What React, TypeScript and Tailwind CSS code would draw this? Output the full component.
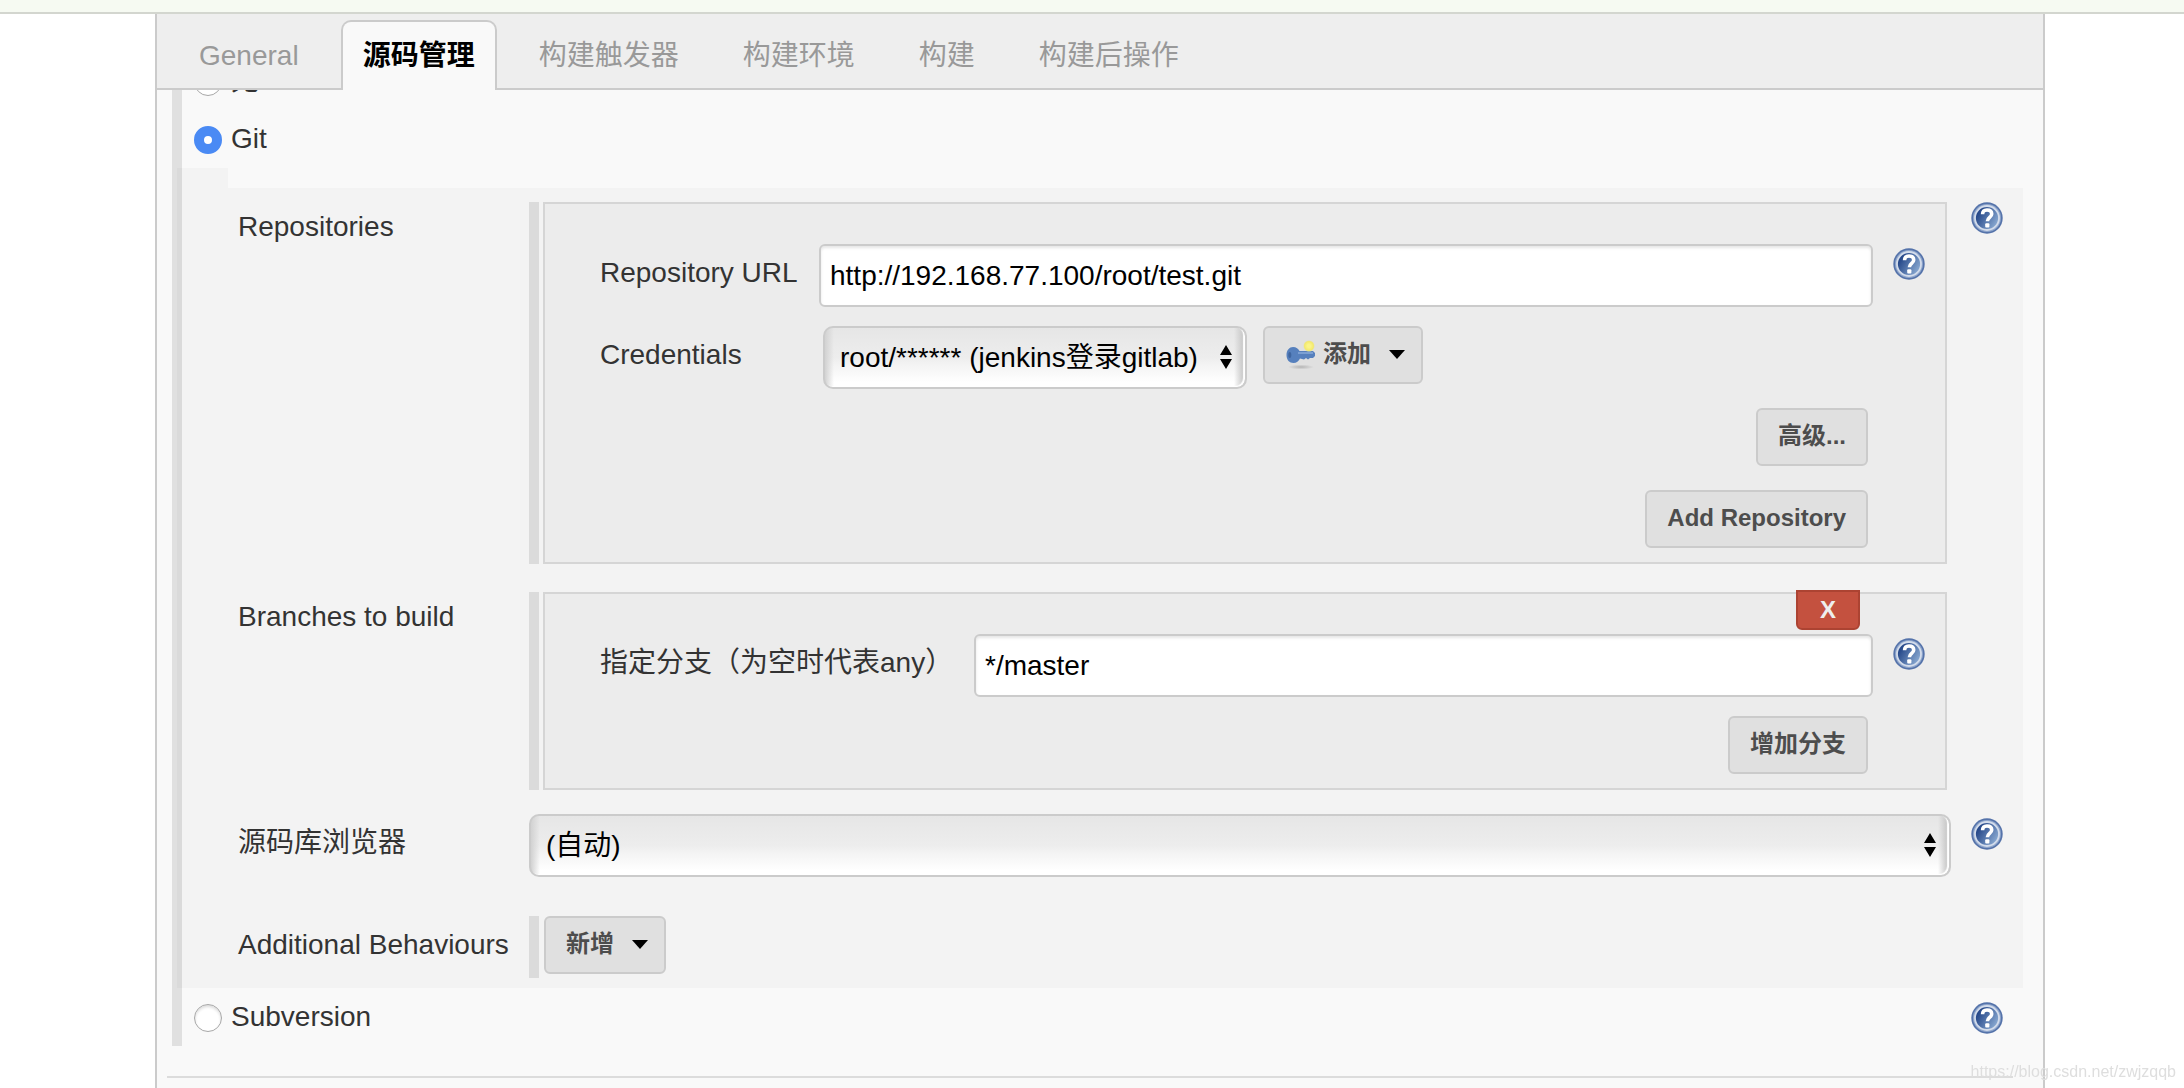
import { useState } from "react"
import type { ReactNode } from "react"

const tabs = ["General", "源码管理", "构建触发器", "构建环境", "构建", "构建后操作"]

const HelpIcon = ({ label }: { label: string }) => {
    return <button type="button" aria-label={label} className="block size-8 shrink-0">
        <svg viewBox="0 0 32 32" className="size-8">
            <defs>
                <linearGradient id="helpFill" x1="0" y1="0.2" x2="1" y2="0.8">
                    <stop offset="0.15" stopColor="#27498a" />
                    <stop offset="0.9" stopColor="#86a6cf" />
                </linearGradient>
            </defs>
            <circle cx="16" cy="16" r="15.7" fill="#5573aa" />
            <circle cx="16" cy="16" r="14" fill="#8fa6cc" />
            <circle cx="16" cy="16" r="12" fill="url(#helpFill)" stroke="#d3dceb" strokeWidth="1.8" />
            <path d="M11.600 12.200c0-2.700 1.800-4.200 4.400-4.200 2.800 0 4.700 1.500 4.700 4 0 3.500-4.300 3.300-4.300 7.200" fill="none" stroke="#fff" strokeWidth="3.600" />
            <rect x="14.200" y="21.200" width="4.200" height="4.200" rx="1" fill="#fff" />
        </svg>
    </button>
}

const KeyIcon = () => {
    return <svg viewBox="0 0 32 32" className="size-8">
        <defs>
            <radialGradient id="keyShadow">
                <stop offset="0.2" stopColor="#bdbdbd" />
                <stop offset="1" stopColor="#e0e0e0" />
            </radialGradient>
            <radialGradient id="keySpark">
                <stop offset="0.3" stopColor="#faf489" />
                <stop offset="0.8" stopColor="#f3e96e" />
                <stop offset="1" stopColor="#e6e2a8" />
            </radialGradient>
        </defs>
        <ellipse cx="16" cy="29" rx="13" ry="2.500" fill="url(#keyShadow)" />
        <path d="M1.500 17c0-5 3-8 6.500-8 3.200 0 5.500 1.800 6.500 4h13.500l2 2v3l-2 2h-3l-2 1.500-2-1.500-2 1.500-4-1c-1.200 2.500-3.500 4.500-6.500 4.500-4 0-7-3-7-8z" fill="#5680bd" />
        <path d="M13 15h15" stroke="#7b9fd2" strokeWidth="2" />
        <ellipse cx="4.800" cy="17" rx="1.500" ry="3" fill="#3f659f" />
        <circle cx="24" cy="8" r="5.500" fill="url(#keySpark)" />
    </svg>
}

const Caret = () => {
    return <svg viewBox="0 0 16 9" className="-mr-1 h-[9px] w-4">
        <path d="M0 0h16L8 9z" fill="#000" />
    </svg>
}

const Button = ({ children }: { children: ReactNode }) => {
    return <button
        type="button"
        className="flex h-[58px] items-center rounded-md border-2 border-[#cbcbcb] bg-[#e0e0e0] px-5 pb-0.5 text-2xl font-bold text-[#4d4d4d]">
        {children}
    </button>
}

const TextBox = ({ id, value }: { id: string, value: string }) => {
    return <input
        id={id}
        type="text"
        defaultValue={value}
        className="h-[63px] w-full min-w-0 rounded-md border-2 border-[#cbcbcb] bg-white px-[9px] text-[28px] text-black shadow-[inset_0_2px_3px_#e6e6e6] focus:outline-none" />
}

const Select = ({ id, options }: { id: string, options: string[] }) => {
    return <div className="relative">
        <select
            id={id}
            className="h-[63px] w-full appearance-none rounded-[10px] border-2 border-[#cbcbcb] bg-[linear-gradient(to_right,#d2d2d2,transparent_9px,transparent_calc(100%-11px),#c8c8c8_calc(100%-2px)),linear-gradient(#e6e6e6,#ededed_50%,#f3f3f3_62%,#ffffff_92%)] pl-[15px] pr-[47px] text-[28px] text-black shadow-[inset_-2px_-1px_1px_#fff] focus:outline-none">
            {options.map((o) => <option key={o}>{o}</option>)}
        </select>
        <svg viewBox="0 0 12 24" className="pointer-events-none absolute right-[15px] top-[19px] h-6 w-3">
            <path d="M6 0l6 10H0zM6 24l6-10H0z" fill="#000" />
        </svg>
    </div>
}

const RadioRow = ({ label, value, picked, onPick }: { label: string, value: string, picked: string, onPick: (v: string) => void }) => {
    return <label className="flex h-[58px] grow items-center gap-[9px] pl-3">
        <input
            type="radio"
            name="scm"
            value={value}
            checked={picked === value}
            onChange={() => onPick(value)}
            className="mt-0.5 size-7 appearance-none rounded-full border border-[#a8a8a8] bg-white shadow-[inset_0_2px_3px_#dcdcdc] checked:border-[10px] checked:border-[#4a8af4] checked:shadow-none" />
        {label}
    </label>
}

// grey strip on the left of every repeatable block
const Chunk = ({ children }: { children: ReactNode }) => {
    return <div className="mr-1 border-l-[10px] border-[#dbdbdb] pl-1">
        {children}
    </div>
}

const SettingRow = ({ label, htmlFor, labelClass, help, children }: { label: string, htmlFor?: string, labelClass: string, help?: ReactNode, children: ReactNode }) => {
    return <div className="flex items-start gap-5">
        <div className="flex min-w-0 grow">
            <label htmlFor={htmlFor} className={`w-[291px] shrink-0 ${labelClass}`}>{label}</label>
            <div className="min-w-0 grow">{children}</div>
        </div>
        <div className="w-8">{help}</div>
    </div>
}

const App = () => {

    const [tab,setTab] = useState("源码管理");
    const [scm,setScm] = useState("git");

    return <div className="flex min-h-screen flex-col overflow-hidden bg-white font-['Liberation_Sans','Noto_Sans_CJK_SC',sans-serif] text-[28px] leading-8 text-[#333]">
        <header className="h-[14px] border-b-2 border-[#d3d6cf] bg-[#f6faf2]"></header>

        <main className="ml-[155px] mr-[139px] grow border-x-2 border-[#cbcbcb] bg-[#f9f9f9]">
            <nav className="relative z-10 flex h-[76px] gap-5 border-b-2 border-[#cbcbcb] bg-[#eeeeee] pl-5 pt-1.5">
                {tabs.map((name) => (
                    <a
                        key={name}
                        href="#"
                        onClick={() => setTab(name)}
                        className={name === tab
                            ? "flex h-[70px] items-center rounded-t-[10px] border-2 border-b-0 border-[#cbcbcb] bg-[#f9f9f9] px-5 font-bold text-black"
                            : "flex h-[70px] items-center border-2 border-b-0 border-transparent px-5 text-[#999]"}>
                        {name}
                    </a>
                ))}
            </nav>

            <section className="ml-[15px] overflow-hidden">
                {/* the first option is scrolled half way under the tabs */}
                <div className="-mt-[38px] border-l-[10px] border-[#e0e0e0]">
                    <RadioRow label="无" value="none" picked={scm} onPick={setScm} />
                    <RadioRow label="Git" value="git" picked={scm} onPick={setScm} />

                    <div className="-ml-[5px] mr-5">
                        <div className="h-5 w-[51px] bg-black/[0.024]"></div>
                        <div className="bg-black/[0.024] pb-2.5 pl-[61px] pr-5 pt-[14px]">
                            <SettingRow label="Repositories" labelClass="pt-[9px]" help={<HelpIcon label="帮助: Repositories" />}>
                                <Chunk>
                                    <div className="border-2 border-[#d5d5d5] bg-[#ececec] pb-[14px] pl-[55px] pr-5 pt-10">
                                        <div className="flex items-start">
                                            <label htmlFor="url" className="w-[219px] shrink-0 pt-[13px]">Repository URL</label>
                                            <TextBox id="url" value="http://192.168.77.100/root/test.git" />
                                            <div className="pl-5 pt-1"><HelpIcon label="帮助: Repository URL" /></div>
                                        </div>
                                        <div className="mt-[19px] flex items-start">
                                            <label htmlFor="credentials" className="w-[223px] shrink-0 pt-[13px]">Credentials</label>
                                            <Select id="credentials" options={["root/****** (jenkins登录gitlab)", "- 无 -"]} />
                                            <div className="pl-4">
                                                <Button>
                                                    <KeyIcon />
                                                    <span className="ml-1.5 mr-[18px]">添加</span>
                                                    <Caret />
                                                </Button>
                                            </div>
                                        </div>
                                        <div className="mr-[57px] mt-[19px] flex flex-col items-end gap-6">
                                            <Button>高级...</Button>
                                            <Button>Add Repository</Button>
                                        </div>
                                    </div>
                                </Chunk>
                            </SettingRow>

                            <div className="mt-7">
                                <SettingRow label="Branches to build" labelClass="pt-[9px]">
                                    <Chunk>
                                        <div className="relative border-2 border-[#d5d5d5] bg-[#ececec] pb-[14px] pl-[55px] pr-5 pt-10">
                                            <button type="button" className="absolute -top-1 right-[85px] h-10 w-16 rounded-b-md border-2 border-[#ac4332] bg-[#c4513f] text-2xl font-bold text-[#eee]">
                                                X
                                            </button>
                                            <div className="flex items-start">
                                                <label htmlFor="branch" className="w-[374px] shrink-0 pt-[13px]">指定分支（为空时代表any）</label>
                                                <TextBox id="branch" value="*/master" />
                                                <div className="pl-5 pt-1"><HelpIcon label="帮助: 指定分支" /></div>
                                            </div>
                                            <div className="mr-[57px] mt-[19px] flex justify-end">
                                                <Button>增加分支</Button>
                                            </div>
                                        </div>
                                    </Chunk>
                                </SettingRow>
                            </div>

                            <div className="mt-6">
                                <SettingRow label="源码库浏览器" htmlFor="browser" labelClass="pt-[13px]" help={<div className="pt-1"><HelpIcon label="帮助: 源码库浏览器" /></div>}>
                                    <Select id="browser" options={["(自动)", "gitlab"]} />
                                </SettingRow>
                            </div>

                            <div className="mt-[39px]">
                                <SettingRow label="Additional Behaviours" labelClass="pt-[13px]">
                                    <Chunk>
                                        <div className="flex pb-1 pl-px">
                                            <Button>
                                                <span className="mr-[18px]">新增</span>
                                                <Caret />
                                            </Button>
                                        </div>
                                    </Chunk>
                                </SettingRow>
                            </div>
                        </div>
                    </div>

                    <div className="mr-10 flex items-start">
                        <RadioRow label="Subversion" value="svn" picked={scm} onPick={setScm} />
                        <div className="pt-3.5"><HelpIcon label="帮助: Subversion" /></div>
                    </div>
                </div>
            </section>

            <hr className="ml-2.5 mr-[30px] mt-[30px] border-t-2 border-[#dcdcdc]" />
        </main>

        <span className="fixed bottom-1 right-2 text-base text-[#dedede]">https://blog.csdn.net/zwjzqqb</span>
    </div>
}

export default App
